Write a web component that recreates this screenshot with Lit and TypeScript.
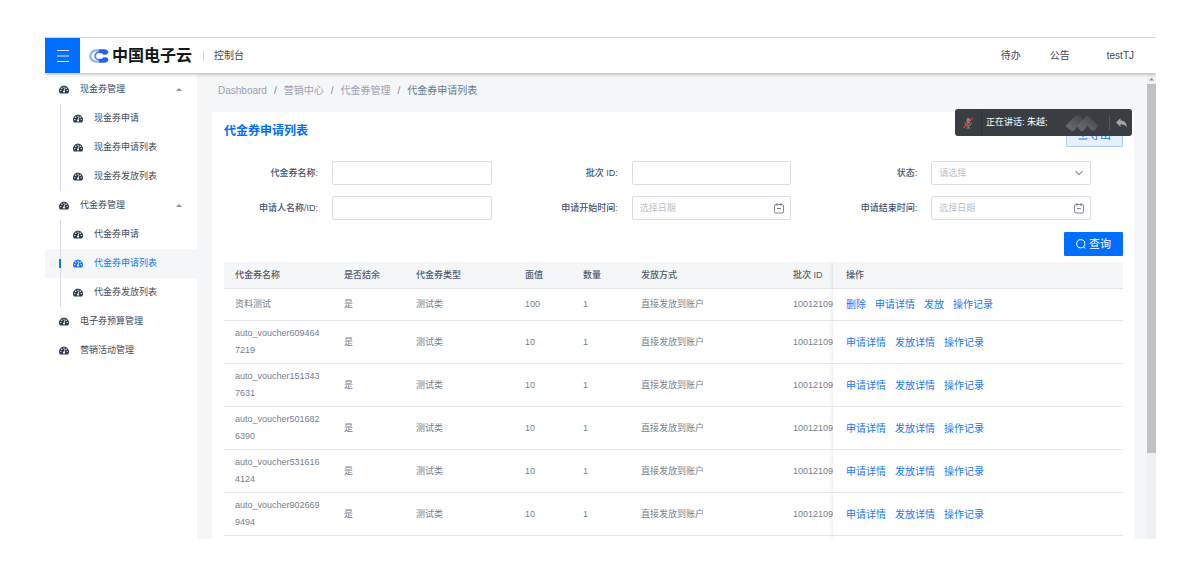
import { LitElement, html, css, svg, nothing } from "lit";
import { customElement } from "lit/decorators.js";
import { classMap } from "lit/directives/class-map.js";

interface MenuItem { label: string; active?: boolean; children?: MenuItem[]; }
interface Field { id: string; label: string; kind: "text" | "select" | "date"; }
interface Voucher { name: string; value: string; links: string[]; }

const MENU: MenuItem[] = [
  { label: "现金券管理", children: [{ label: "现金券申请" }, { label: "现金券申请列表" }, { label: "现金券发放列表" }] },
  { label: "代金券管理", children: [{ label: "代金券申请" }, { label: "代金券申请列表", active: true }, { label: "代金券发放列表" }] },
  { label: "电子券预算管理" },
  { label: "营销活动管理" },
];

const FIELDS: Field[] = [
  { id: "name", label: "代金券名称", kind: "text" },
  { id: "batch", label: "批次 ID", kind: "text" },
  { id: "status", label: "状态", kind: "select" },
  { id: "applicant", label: "申请人名称/ID", kind: "text" },
  { id: "start", label: "申请开始时间", kind: "date" },
  { id: "end", label: "申请结束时间", kind: "date" },
];

const DETAIL_LINKS = ["申请详情", "发放详情", "操作记录"];
const ROWS: Voucher[] = [
  { name: "资料测试", value: "100", links: ["删除", "申请详情", "发放", "操作记录"] },
  ...["6094647219", "1513437631", "5016826390", "5316164124", "9026699494"].map((n) => ({
    name: `auto_voucher${n}`, value: "10", links: DETAIL_LINKS,
  })),
];

const gauge = html`<svg class="gauge" viewBox="0 0 18 16" aria-hidden="true">
  <path fill="currentColor" d="M9 1a9 9 0 0 0-7.7 13.6c.2.3.5.4.8.4h13.800c.3 0 .6-.1.8-.4A9 9 0 0 0 9 1z"/>
  <g fill="#fff"><circle cx="3.300" cy="10" r="1.200"/><circle cx="5" cy="5.700" r="1.200"/><circle cx="9" cy="3.800" r="1.200"/><circle cx="13" cy="5.700" r="1.200"/><circle cx="14.700" cy="10" r="1.200"/></g>
  <path d="M10.500 5.500L9.200 11" stroke="#fff" stroke-width="1.300"/><circle cx="9" cy="11.800" r="1.900" fill="#fff"/>
</svg>`;

const calendar = html`<svg class="affix" viewBox="0 0 12 12" fill="none" stroke="#7d8794" aria-hidden="true">
  <rect x="1.500" y="2.500" width="9" height="8.500" rx="1.500"/><path d="M4 1v3M8 1v3M4 6.500h4"/>
</svg>`;

const chevron = html`<svg class="affix" viewBox="0 0 12 12" fill="none" stroke="#8f98a5" stroke-width="1.200" aria-hidden="true">
  <path d="M2.500 4.200L6 7.700l3.500-3.500"/>
</svg>`;

@customElement("side-menu")
export class SideMenu extends LitElement {
  static styles = css`
    :host { display: block; padding-top: 2px; background: #fff; }
    ul { list-style: none; margin: 0; padding: 0; }
    .item { display: flex; align-items: center; gap: 11px; height: 29px; padding: 0 15px 0 14px; color: #3f4a5c; text-decoration: none; font: inherit; }
    .gauge { width: 10px; height: 9px; color: #2f3c52; flex: none; }
    .caret { margin-left: auto; border: 3px solid transparent; border-top: 0; border-bottom: 3px solid #8c93a0; }
    .group { background: linear-gradient(#d7dae2, #d7dae2) 15px 0 / 1px 100% no-repeat; }
    .group .item { padding-left: 28px; }
    .group .active { color: #1677ff; background: linear-gradient(#0b74ff, #0b74ff) 14px 50% / 2px 9px no-repeat, linear-gradient(#d7dae2, #d7dae2) 15px 0 / 1px 100% no-repeat, #f4f6f8; }
    .active .gauge { color: #1677ff; }
  `;
  private item(m: MenuItem): unknown {
    return html`<li>
      <a href="#" class=${classMap({ item: true, active: !!m.active })}>${gauge}<span>${m.label}</span>${m.children ? html`<i class="caret"></i>` : nothing}</a>
      ${m.children ? html`<ul class="group">${m.children.map((c) => this.item(c))}</ul>` : nothing}
    </li>`;
  }
  render() { return html`<nav><ul>${MENU.map((m) => this.item(m))}</ul></nav>`; }
}

@customElement("search-form")
export class SearchForm extends LitElement {
  static styles = css`
    :host { display: block; }
    form { display: grid; grid-template-columns: repeat(3, 1fr); row-gap: 11px; }
    .field { display: grid; grid-template-columns: 94px 1fr; column-gap: 14px; align-items: center; padding-right: 32px; }
    label { text-align: right; color: #48536a; font-weight: 500; white-space: nowrap; }
    .box { display: grid; grid-template-columns: 1fr 18px; align-items: center; }
    .control { grid-area: 1 / 1 / 2 / 3; box-sizing: border-box; width: 100%; height: 24px; padding: 0 7px; border: 1px solid #dcdee3; border-radius: 2px; background: #fff; font: inherit; color: #b9bfca; appearance: none; outline: none; }
    .control::placeholder { color: #b9bfca; opacity: 1; }
    .affix { grid-area: 1 / 2; width: 12px; height: 12px; pointer-events: none; z-index: 1; }
    .actions { grid-column: 1 / -1; display: flex; justify-content: flex-end; padding-top: 1px; }
    .search { display: flex; align-items: center; gap: 3px; height: 24px; padding: 0 12px; border: 0; border-radius: 1px; background: #006eff; color: #fff; font: inherit; font-size: 11px; }
    .search svg { width: 10px; height: 10px; }
  `;
  private control(f: Field) {
    if (f.kind === "select") return html`<select class="control" id=${f.id}><option>请选择</option></select>${chevron}`;
    if (f.kind === "date") return html`<input class="control" id=${f.id} type="text" placeholder="选择日期" />${calendar}`;
    return html`<input class="control" id=${f.id} type="text" />`;
  }
  render() {
    return html`<form>
      ${FIELDS.map((f) => html`<div class="field"><label for=${f.id}>${f.label}:</label><div class="box">${this.control(f)}</div></div>`)}
      <div class="actions"><button type="button" class="search">
        <svg viewBox="0 0 12 12" fill="none" stroke="currentColor" stroke-width="1.200" aria-hidden="true"><circle cx="5.700" cy="5.700" r="4.900"/><path d="M8.900 9.200L11.200 11.600"/></svg>查询</button></div>
    </form>`;
  }
}

@customElement("voucher-table")
export class VoucherTable extends LitElement {
  static styles = css`
    :host { display: block; overflow: hidden; }
    table { width: 100%; min-width: 899px; table-layout: fixed; border-collapse: separate; border-spacing: 0; line-height: 17px; color: #76808f; }
    .w-name { width: 109px; } .w-flag { width: 72px; } .w-num { width: 58px; } .w-way { width: 152px; } .w-ops { width: 290px; }
    th, td { box-sizing: border-box; padding: 4px 11px; text-align: left; border-bottom: 1px solid #e6e8eb; word-break: break-all; }
    th { height: 27px; background: #f4f6f8; color: #505c70; font-weight: 500; border-bottom: 1px solid #e4e7ea; }
    td { height: 32px; }
    .tall td { height: 43px; }
    .batch { padding-right: 0; white-space: nowrap; overflow: hidden; }
    .ops { position: sticky; right: 0; padding-left: 13px; background: #fff; box-shadow: -1px 0 4px rgba(0, 0, 0, 0.1); clip-path: inset(0 0 0 -6px); }
    th.ops { background: #f4f6f8; }
    .links { display: flex; gap: 9px; font-size: 10px; }
    a { color: #1677ff; text-decoration: none; white-space: nowrap; }
  `;
  render() {
    return html`<table>
      <colgroup><col class="w-name" /><col class="w-flag" /><col class="w-name" /><col class="w-num" /><col class="w-num" /><col class="w-way" /><col /><col class="w-ops" /></colgroup>
      <thead><tr><th>代金券名称</th><th>是否结余</th><th>代金券类型</th><th>面值</th><th>数量</th><th>发放方式</th><th class="batch">批次 ID</th><th class="ops">操作</th></tr></thead>
      <tbody>
        ${ROWS.map((r, i) => html`<tr class=${i ? "tall" : ""}>
          <td>${r.name}</td><td>是</td><td>测试类</td><td>${r.value}</td><td>1</td><td>直接发放到账户</td><td class="batch">100121092</td>
          <td class="ops"><div class="links">${r.links.map((l) => html`<a href="#">${l}</a>`)}</div></td>
        </tr>`)}
        <tr class="tall"><td colspan="7"></td><td class="ops"></td></tr>
      </tbody>
    </table>`;
  }
}

@customElement("speaker-toast")
export class SpeakerToast extends LitElement {
  static styles = css`
    :host { display: flex; align-items: stretch; box-sizing: border-box; width: 177px; height: 27px; border-radius: 3px; background: #3a3d41; color: #fff; }
    .mic { display: grid; place-items: center; width: 26px; border-right: 1px solid #303337; }
    .mic svg { width: 12px; height: 12px; }
    .text { display: flex; align-items: center; padding-left: 4px; white-space: nowrap; }
    .mark { width: 34px; height: 18px; margin: auto 10px auto auto; }
    .back { display: grid; place-items: center; width: 23px; height: 15px; margin: auto 0; padding: 0; border: 0; border-left: 1px solid #54575b; background: none; }
    .back svg { width: 11px; height: 10px; }
  `;
  render() {
    return html`
      <span class="mic"><svg viewBox="0 0 12 12" fill="none" aria-hidden="true"><rect x="4.500" y="1" width="3.500" height="6" rx="1.700" fill="#85888c"/><path d="M3 5.500a3.200 3.200 0 0 0 6.400 0M6.200 8.800V11M4.500 11h3.500" stroke="#85888c"/><path d="M1.500 11L10.500 1" stroke="#d9433c" stroke-width="1.200"/></svg></span>
      <span class="text">正在讲话: 朱越;</span>
      <svg class="mark" viewBox="0 0 34 18" aria-hidden="true">
        <defs><linearGradient id="g" x1="0" y1="1" x2="1" y2="0"><stop offset="0" stop-color="#6d7073"/><stop offset="1" stop-color="#414549"/></linearGradient></defs>
        ${svg`<path fill="url(#g)" d="M1 11L11 1.500q1.500-1 3 0l5 5-10 10q-2 1-3 0l-5-4z"/><path fill="url(#g)" d="M12 12l9-9.500q1.500-1 3 0l9 9-3 4.500q-2 1.500-4 0l-3.500-4-4 4.500q-2 1-3 0z"/>`}
      </svg>
      <button class="back" type="button" aria-label="返回"><svg viewBox="0 0 11 10" fill="#a2a5a8" aria-hidden="true"><path d="M4.500 0v2.500c4 0 6.200 2 6.200 7C9.500 7 7.500 6.300 4.500 6.300V9L0 4.500z"/></svg></button>`;
  }
}

@customElement("app-root")
export class AppRoot extends LitElement {
  static styles = css`
    :host { display: block; box-sizing: border-box; height: 100vh; padding: 37px 25px 25px 45px; background: #fff; font: 9px/17px "Liberation Sans", "Noto Sans CJK SC", sans-serif; }
    .frame { position: relative; display: grid; grid-template: 36px 1fr / 152px 1fr; height: 100%; }
    header { grid-column: 1 / -1; display: flex; align-items: center; box-sizing: border-box; border-top: 1px solid #d5d6d8; background: #fff; box-shadow: 0 1px 4px rgba(0, 0, 0, 0.3); clip-path: inset(0 0 -6px 0); z-index: 1; padding-right: 22px; font-size: 10px; color: #3f4858; }
    .menu { display: grid; place-items: center; align-self: stretch; width: 35px; padding: 0; border: 0; background: #006eff; }
    .menu svg { width: 12px; height: 12px; }
    .brand { display: flex; align-items: center; gap: 3px; padding: 0 11px 0 9px; color: #15171a; font-size: 16px; font-weight: 700; line-height: 20px; }
    .brand svg { width: 20px; height: 14px; }
    .product { padding-left: 10px; border-left: 1px solid #cfd2d6; line-height: 10px; }
    .tools { display: flex; gap: 29px; margin-left: auto; }
    .tools a { color: inherit; text-decoration: none; }
    .user { padding-left: 8px; }
    .body { display: grid; grid-template-columns: 1fr 9px; min-height: 0; overflow: hidden; background: #f4f6f8; }
    main { min-width: 0; overflow: hidden; padding: 0 13px 0 15px; }
    .crumbs { display: flex; align-items: center; height: 39px; box-sizing: border-box; padding: 0 6px 4px; font-size: 10px; color: #98a1b0; }
    .crumbs a { color: inherit; text-decoration: none; }
    .crumbs i { margin: 0 7px; font-style: normal; color: #7d8798; }
    .crumbs b { font-weight: 400; color: #6c788a; }
    .card { padding: 11px 11px 11px 12px; background: #fff; }
    .head { display: flex; align-items: flex-start; justify-content: space-between; margin-bottom: 14px; }
    h1 { margin: 0; font-size: 12px; line-height: 16px; font-weight: 700; color: #006eff; }
    .export { display: flex; align-items: center; gap: 1px; height: 24px; padding: 0 11px; border: 1px solid #a9ccff; border-radius: 1px; background: #e6f0ff; color: #1677ff; font: inherit; font-size: 11px; }
    .export svg { width: 10px; height: 10px; }
    search-form { margin-bottom: 6px; }
    .rail { display: grid; grid-template-rows: 11px 369px 1fr; background: #f0f1f2; }
    .rail svg { width: 9px; height: 11px; }
    .thumb { background: #c1c1c1; }
    speaker-toast { position: absolute; top: 72px; right: 24px; z-index: 2; }
  `;
  render() {
    return html`<div class="frame">
      <header>
        <button class="menu" type="button" aria-label="菜单"><svg viewBox="0 0 12 12" stroke="#d9e9ff" aria-hidden="true"><path d="M0 .5h12M0 6h12M0 11.500h12"/></svg></button>
        <div class="brand">
          <svg viewBox="0 0 20 14" fill="none" aria-hidden="true">
            <path d="M10 1.300H7a5.700 5.700 0 0 0 0 11.400h3" stroke="#86b4ff" stroke-width="2.200"/>
            <path d="M12 3.200h-2a3.800 3.800 0 0 0 0 7.600h2" stroke="#4a86f7" stroke-width="1.800"/>
            <path fill="#2463e6" d="M10 .3h5.500c1.800 0 3.300 1.200 4 3-.6 1.600-1.700 2.400-3 2.400h-2L13 4.200h-3zM10 13.700h5.500c1.800 0 3.300-1.200 4-3-.6-1.600-1.700-2.400-3-2.400h-2L13 9.800h-3z"/>
          </svg><span>中国电子云</span>
        </div>
        <span class="product">控制台</span>
        <nav class="tools"><a href="#">待办</a><a href="#">公告</a><a href="#" class="user">testTJ</a></nav>
      </header>
      <side-menu></side-menu>
      <div class="body">
        <main>
          <nav class="crumbs"><a href="#">Dashboard</a><i>/</i><a href="#">营销中心</a><i>/</i><a href="#">代金券管理</a><i>/</i><b>代金券申请列表</b></nav>
          <section class="card">
            <div class="head"><h1>代金券申请列表</h1>
              <button class="export" type="button"><svg viewBox="0 0 10 10" fill="none" stroke="currentColor" aria-hidden="true"><path d="M5 7V1M2.500 3.500L5 1l2.500 2.500M.5 9h9"/></svg>导出</button></div>
            <search-form></search-form>
            <voucher-table></voucher-table>
          </section>
        </main>
        <div class="rail"><svg viewBox="0 0 9 11" aria-hidden="true"><path fill="#8d8d8d" d="M2 7.500L4.500 5 7 7.500z"/></svg><div class="thumb"></div></div>
      </div>
      <speaker-toast></speaker-toast>
    </div>`;
  }
}
